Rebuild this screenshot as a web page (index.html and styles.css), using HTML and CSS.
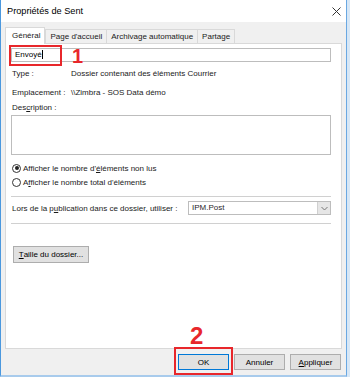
FILE: index.html
```html
<!DOCTYPE html>
<html lang="fr">
<head>
  <meta charset="UTF-8">
  <title>Propriétés de Sent</title>
  <link rel="stylesheet" href="styles.css">
</head>
<body>
  <div class="window">
    <div class="titlebar">
      <span class="title">Propriétés de Sent</span>
      <svg class="close" width="9" height="9" viewBox="0 0 9 9"><path d="M0.5 0.5L8.5 8.5M8.5 0.5L0.5 8.5" stroke="#333" stroke-width="1"/></svg>
    </div>
    <div class="main">
      <div class="tabs">
        <div class="tab active">Général</div>
        <div class="tab">Page d'accueil</div>
        <div class="tab">Archivage automatique</div>
        <div class="tab">Partage</div>
      </div>
      <div class="panel">
        <div class="name-row">
          <div class="field name">Envoyé<span class="caret"></span></div>
          <div class="mark-box"></div>
          <span class="num num-1">1</span>
        </div>
        <div class="info-row row-type"><span class="label">Type :</span><span>Dossier contenant des éléments Courrier</span></div>
        <div class="info-row"><span class="label">Emplacement :</span><span>\\Zimbra - SOS Data démo</span></div>
        <div class="desc-label">Des<u>c</u>ription :</div>
        <div class="field area"></div>
        <div class="radio-row first"><span class="radio checked"></span>Afficher le nombre d'<u>é</u>léments non lus</div>
        <div class="radio-row"><span class="radio"></span>A<u>f</u>ficher le nombre total d'éléments</div>
        <div class="sep sep-1"></div>
        <div class="pub-row">
          <span>Lors de la p<u>u</u>blication dans ce dossier, utiliser :</span>
          <div class="field select">IPM.Post
            <span class="drop"><svg width="7" height="5" viewBox="0 0 7 5"><path d="M0.5 1L3.5 4L6.5 1" fill="none" stroke="#777" stroke-width="1"/></svg></span>
          </div>
        </div>
        <div class="sep sep-2"></div>
        <div class="btn size-btn"><u>T</u>aille du dossier...</div>
      </div>
      <div class="footer">
        <div class="btn ok">OK
          <span class="ok-mark"></span>
          <span class="num num-2">2</span>
        </div>
        <div class="btn">Annuler</div>
        <div class="btn"><u>A</u>ppliquer</div>
      </div>
    </div>
  </div>
</body>
</html>
```

FILE: styles.css
```css
body { margin: 0; background: #d7e7f6; font-family: "Liberation Sans", Arial, sans-serif; font-size: 8px; color: #1a1a1a; }
.window { width: 345px; height: 375px; background: #f0f0f0; border-left: 1px solid #4b98de; border-right: 1px solid #6aa8e2; border-bottom: 2px solid #a8cbec; display: flex; flex-direction: column; }
.titlebar { flex-shrink: 0; height: 22px; background: #fff; display: flex; align-items: center; justify-content: space-between; padding: 0 5px 0 6px; }
.title { font-size: 9.2px; color: #000; }
.close { margin-top: 1px; }
.main { flex: 1; display: flex; flex-direction: column; padding: 5px 4px 0 4px; }
.tabs { flex-shrink: 0; display: flex; height: 16px; align-items: flex-end; position: relative; z-index: 1; }
.tab { height: 14px; line-height: 14px; padding: 0 4px; border: 1px solid #d9d9d9; border-bottom: none; margin-left: -1px; background: #f0f0f0; box-sizing: border-box; }
.tab.active { height: 17px; line-height: 16px; margin-bottom: -1px; background: #fff; padding: 0 4px 0 6px; margin-left: 0; margin-right: 1px; }
.panel { flex-shrink: 0; height: 306px; box-sizing: border-box; background: #fff; border: 1px solid #d9d9d9; padding: 0 10px 0 5px; display: flex; flex-direction: column; }
.field { border: 1px solid #bdbdbd; background: #fff; box-sizing: border-box; }
.name-row { position: relative; margin-top: 4px; }
.name { height: 14px; line-height: 12px; padding-left: 3px; color: #000; }
.caret { display: inline-block; width: 1px; height: 9px; background: #000; vertical-align: -2px; }
.mark-box { position: absolute; left: -2px; top: -3px; width: 49px; height: 17px; border: 2px solid #e8272b; }
.num { position: absolute; color: #e8272b; font-weight: bold; line-height: 1; }
.num-1 { left: 61px; top: -2px; font-size: 20px; }
.info-row { display: flex; height: 19px; align-items: center; padding-left: 1px; }
.row-type { margin-top: 2px; }
.label { width: 59px; }
.desc-label { height: 13px; line-height: 12px; padding-left: 1px; }
.area { height: 40px; }
.radio-row { display: flex; align-items: center; height: 14px; padding-left: 1px; }
.radio-row.first { margin-top: 6px; }
.radio { width: 9px; height: 9px; border: 1px solid #333; border-radius: 50%; box-sizing: border-box; margin-right: 2px; position: relative; }
.radio.checked::after { content: ""; position: absolute; left: 1.5px; top: 1.5px; width: 4px; height: 4px; border-radius: 50%; background: #222; }
.sep { height: 1px; background: #d0d0d0; }
.sep-1 { margin-top: 7px; }
.sep-2 { margin-top: 8px; }
.pub-row { display: flex; align-items: center; justify-content: space-between; padding-left: 1px; margin-top: 4px; }
.select { width: 143px; height: 14px; line-height: 12px; padding-left: 3px; display: flex; justify-content: space-between; color: #2a1f2a; }
.drop { width: 12px; height: 12px; background: #e6e6e6; border-left: 1px solid #d0d0d0; display: flex; align-items: center; justify-content: center; }
.btn { height: 16px; width: 51px; box-sizing: border-box; background: #e1e1e1; border: 1px solid #adadad; display: flex; align-items: center; justify-content: center; color: #000; }
.size-btn { width: 76px; margin-top: 22px; margin-left: 2px; height: 17px; }
.footer { flex-shrink: 0; display: flex; justify-content: flex-end; gap: 5px; padding-right: 1px; margin-top: 5px; }
.ok { position: relative; border-color: #0078d7; }
.ok-mark { position: absolute; left: -5px; top: -8px; width: 55px; height: 24px; border: 2px solid #e8272b; }
.num-2 { left: 11px; top: -31px; font-size: 24px; }
```
